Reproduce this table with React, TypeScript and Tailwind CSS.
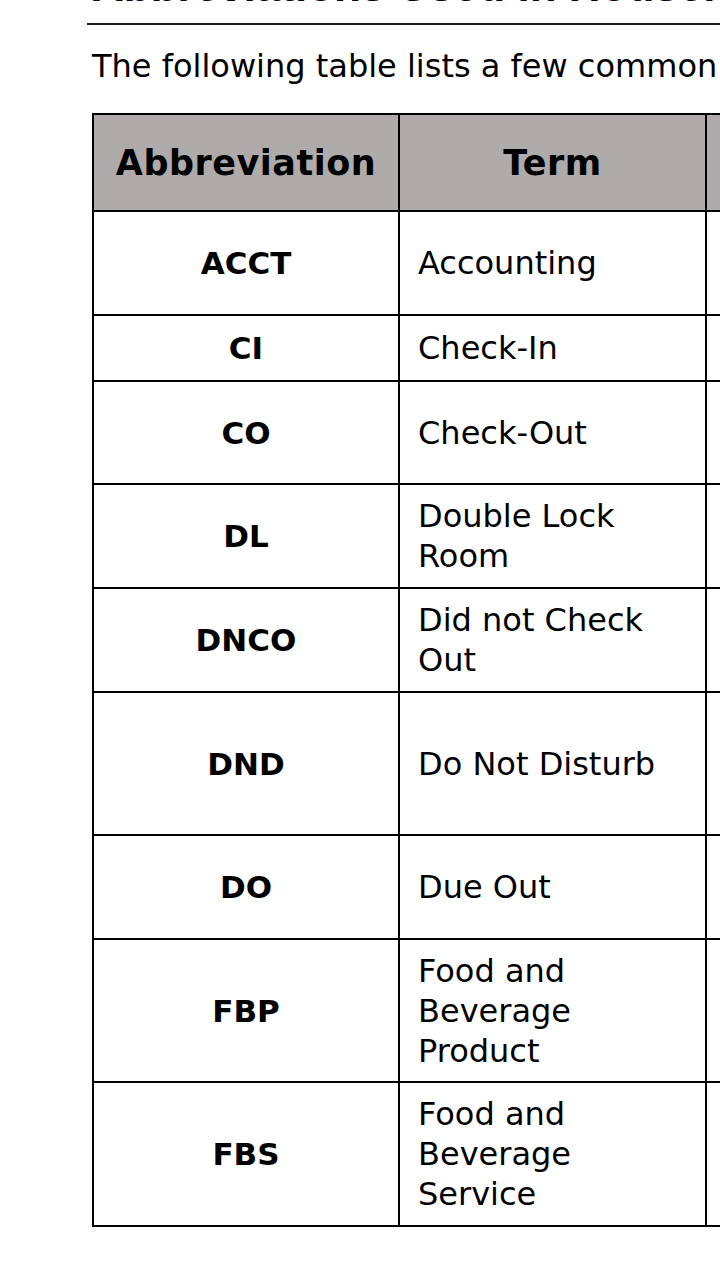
const rows: { abbr: string; term: string[]; h: string }[] = [
  { abbr: "ACCT", term: ["Accounting"], h: "h-[104px]" },
  { abbr: "CI", term: ["Check-In"], h: "h-[66px]" },
  { abbr: "CO", term: ["Check-Out"], h: "h-[103px]" },
  { abbr: "DL", term: ["Double Lock", "Room"], h: "h-[104px]" },
  { abbr: "DNCO", term: ["Did not Check", "Out"], h: "h-[104px]" },
  { abbr: "DND", term: ["Do Not Disturb"], h: "h-[143px]" },
  { abbr: "DO", term: ["Due Out"], h: "h-[104px]" },
  { abbr: "FBP", term: ["Food and", "Beverage", "Product"], h: "h-[143px]" },
  { abbr: "FBS", term: ["Food and", "Beverage", "Service"], h: "h-[142px]" },
];

export default function App() {
  return (
    <div className="w-[720px] h-[1280px] overflow-hidden bg-white text-black">
      <div className="pl-[92px] w-[900px]">
        <h1 className="mt-[-36px] text-[44px] leading-none font-bold whitespace-nowrap font-['Liberation_Sans',Arial,sans-serif]">
          Abbreviations Used in Housekeeping
        </h1>
        <div className="mt-[15px] ml-[-5px] h-[2px] bg-[#1a1a1a]" />
        <p className="mt-[21px] text-[32px] leading-[40px] whitespace-nowrap font-['DejaVu_Sans',Verdana,sans-serif]">
          The following table lists a few common abbreviations used
        </p>
        <div className="mt-[27px] w-[800px] border-2 border-black font-['DejaVu_Sans',Verdana,sans-serif] text-[32px] leading-[40px]">
          <div className="flex h-[97px] border-b-2 border-black bg-[#afabaa] font-bold text-[35px] tracking-[0.5px]">
            <div className="w-[306px] shrink-0 border-r-2 border-black flex items-center justify-center">
              Abbreviation
            </div>
            <div className="w-[307px] shrink-0 border-r-2 border-black flex items-center justify-center">
              Term
            </div>
            <div className="flex-1" />
          </div>
          {rows.map((r, i) => (
            <div
              key={r.abbr}
              className={`flex ${r.h} ${i < rows.length - 1 ? "border-b-2 border-black" : ""}`}
            >
              <div className="w-[306px] shrink-0 border-r-2 border-black flex items-center justify-center font-bold text-[31px]">
                {r.abbr}
              </div>
              <div className="w-[307px] shrink-0 border-r-2 border-black flex flex-col justify-center pl-[18px]">
                {r.term.map((t) => (
                  <span key={t} className="whitespace-nowrap">
                    {t}
                  </span>
                ))}
              </div>
              <div className="flex-1" />
            </div>
          ))}
        </div>
      </div>
    </div>
  );
}
